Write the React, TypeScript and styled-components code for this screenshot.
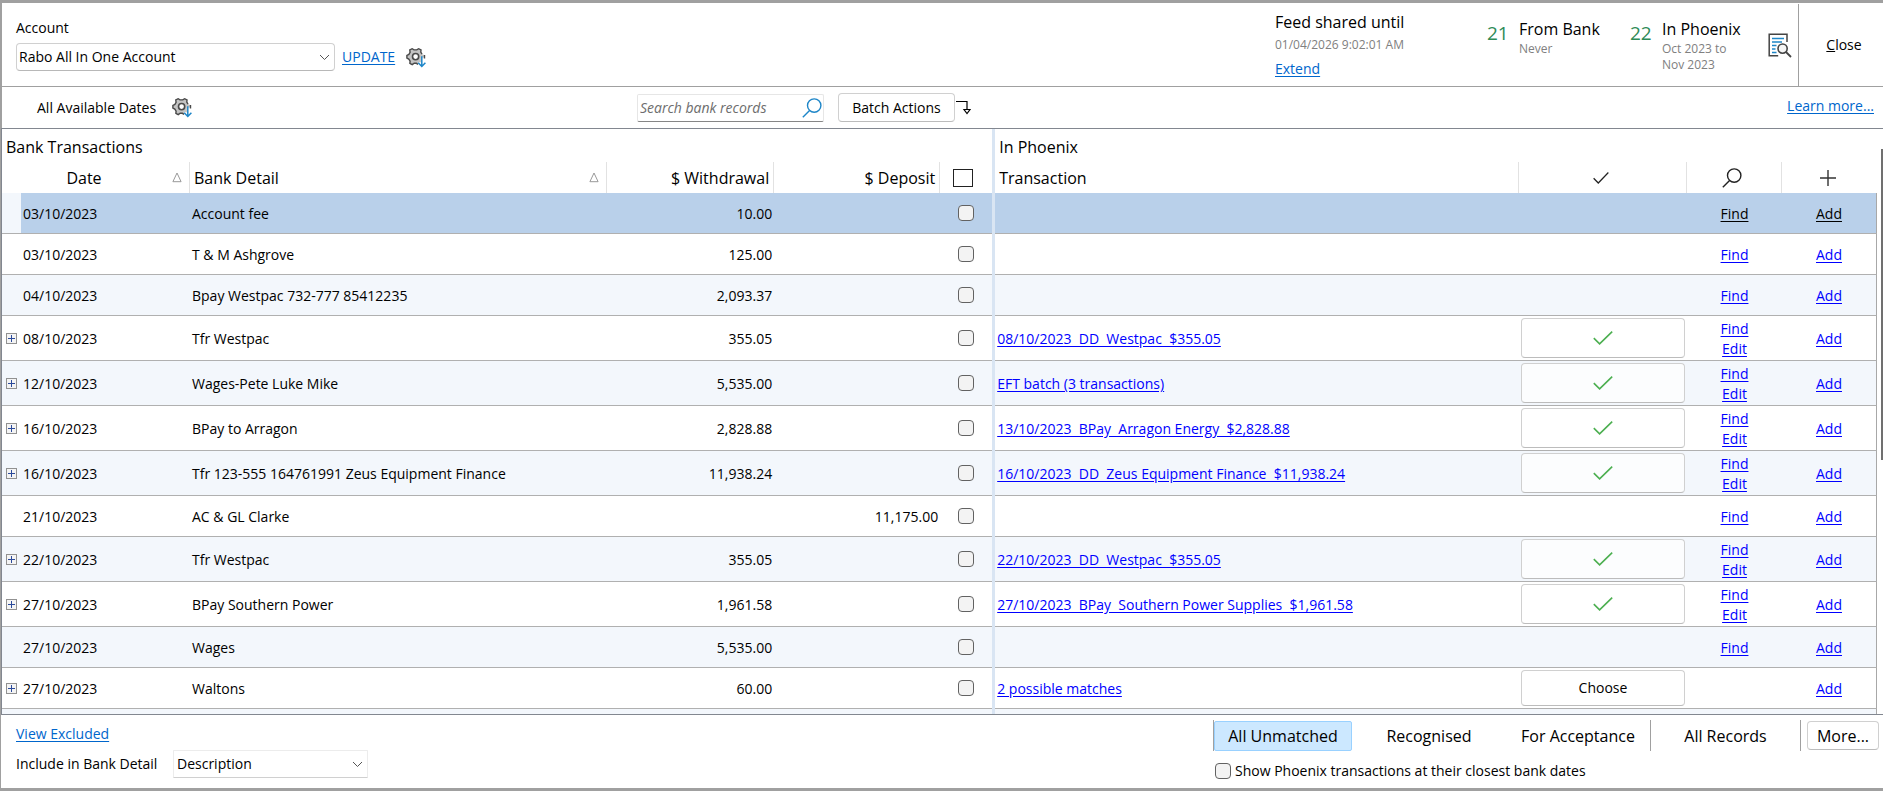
import React from "react";
import styled, { createGlobalStyle, css } from "styled-components";

const GlobalStyle = createGlobalStyle`
  *, *::before, *::after { box-sizing: border-box; }
  body {
    margin: 0;
    background: #fff;
    color: #000;
    font-family: "Segoe UI", "Open Sans", "Noto Sans", sans-serif;
    font-size: 14px;
    line-height: 20px;
  }
  button, input, select { font: inherit; color: inherit; }
`;

const Window = styled.div`
  display: flex;
  flex-direction: column;
  height: 100vh;
  min-height: 480px;
  border: solid #a0a0a0;
  border-width: 3px 0 3px 1px;
`;

const Header = styled.header`
  display: flex;
  justify-content: space-between;
  height: 84px;
  flex: none;
  border-left: 1px solid #a0a0a0;
  border-bottom: 1px solid #a0a0a0;
  white-space: nowrap;
`;

const AccountPanel = styled.div`
  display: flex;
  flex-direction: column;
  gap: 5px;
  padding: 15px 0 0 14px;
`;

const AccountLine = styled.div`
  display: flex;
  align-items: center;
`;

const SelectBox = styled.span<{ $width: number; $plain?: boolean }>`
  display: inline-grid;
  align-items: center;
  width: ${(p) => p.$width}px;
  height: 28px;
  border: 1px solid ${(p) => (p.$plain ? "#ececec" : "#d0d0d0")};
  border-bottom-color: ${(p) => (p.$plain ? "#d0d0d0" : "#b8b8b8")};
  border-radius: ${(p) => (p.$plain ? 1 : 4)}px;

  select {
    grid-area: 1 / 1;
    width: 100%;
    height: 26px;
    padding: 0 28px 0 ${(p) => (p.$plain ? 3 : 2)}px;
    border: 0;
    background: transparent;
    appearance: none;
  }
  svg {
    grid-area: 1 / 1;
    justify-self: end;
    margin-right: 4px;
    pointer-events: none;
  }
`;

const AppLink = styled.a`
  color: #0066cc;
  text-decoration: underline;
  text-underline-offset: 2px;
`;

const UpdateLink = styled(AppLink)`
  margin: 0 11px 0 7px;
`;

const ExtendLink = styled(AppLink)`
  line-height: 26px;
`;

const IconButton = styled.button`
  display: inline-flex;
  padding: 0;
  border: 0;
  background: none;
`;

const StatusPanel = styled.div`
  display: flex;
  flex: none;
`;

const Feed = styled.div`
  display: flex;
  flex-direction: column;
  align-items: flex-start;
  width: 212px;
  padding-top: 7px;
`;

const Heading = styled.span`
  font-size: 16px;
  line-height: 24px;
`;

const Muted = styled.span`
  color: #808080;
  font-size: 12px;
  line-height: 16px;
`;

const FeedDate = styled(Muted)`
  line-height: 22px;
`;

const Stat = styled.div<{ $width: number }>`
  display: flex;
  width: ${(p) => p.$width}px;
  padding-top: 14px;
`;

const StatCount = styled.span`
  width: 32px;
  color: #2e8b57;
  font-size: 19px;
  line-height: 32px;
`;

const StatText = styled.div`
  display: flex;
  flex-direction: column;
`;

const ReportCell = styled.div`
  display: flex;
  align-items: center;
  width: 30px;
  padding-top: 1px;
`;

const CloseButton = styled.button`
  width: 85px;
  margin-top: 1px;
  padding: 0 0 0 6px;
  border: 0;
  border-left: 1px solid #a0a0a0;
  background: none;
`;

const Toolbar = styled.div`
  display: flex;
  align-items: center;
  flex: none;
  height: 41px;
  padding: 0 9px 0 35px;
  border-left: 1px solid #a0a0a0;
  white-space: nowrap;
`;

const DateFilter = styled.div`
  display: flex;
  align-items: center;
  gap: 16px;
  flex: 0 1 600px;
`;

const SearchBox = styled.label`
  display: flex;
  align-items: center;
  width: 187px;
  height: 28px;
  padding: 0 1px 0 2px;
  border: 1px solid #e6e6e6;
  border-bottom-color: #868686;
  border-radius: 2px;

  input {
    flex: 1;
    min-width: 0;
    padding: 0;
    border: 0;
    outline: 0;
    font-style: italic;
    background: none;
  }
  input::placeholder { color: #6d6d6d; opacity: 1; }
`;

const PushButton = styled.button<{ $width?: string; $height: number }>`
  display: inline-flex;
  align-items: center;
  justify-content: center;
  width: ${(p) => p.$width ?? "auto"};
  height: ${(p) => p.$height}px;
  padding: 0;
  border: 1px solid #d0d0d0;
  border-bottom-color: #bcbcbc;
  border-radius: 4px;
  background: rgba(255, 255, 255, 0.7);
`;

const BatchGroup = styled.div`
  display: flex;
  align-items: center;
  gap: 1px;
  margin-left: 14px;
`;

const LearnMore = styled(AppLink)`
  margin: 0 0 4px auto;
`;

const GridArea = styled.main`
  display: flex;
  flex: 1;
  min-height: 0;
  overflow: hidden;
  border: solid #828790;
  border-width: 1px 0 1px 1px;
`;

const TableScroll = styled.div`
  display: flex;
  flex: 1;
  align-items: flex-start;
  min-width: 0;
  overflow: hidden;
`;

const Table = styled.table`
  flex: 1;
  min-width: 0;
  table-layout: fixed;
  border-collapse: separate;
  border-spacing: 0;
  white-space: nowrap;
`;

const Col = styled.col<{ $width?: string }>`
  width: ${(p) => p.$width ?? "auto"};
`;

const TitleCell = styled.th`
  height: 33px;
  padding: 2px 0 0 4px;
  font-size: 16px;
  font-weight: 400;
  text-align: left;
`;

const HeadCell = styled.th<{ $line?: boolean; $align?: string; $indent?: number }>`
  height: 31px;
  padding: 0 4px 0 ${(p) => p.$indent ?? 4}px;
  border-right: ${(p) => (p.$line ? "1px solid #e2e2e2" : "0")};
  font-size: 16px;
  font-weight: 400;
  text-align: ${(p) => p.$align ?? "left"};

  svg { display: block; margin: 0 auto; }
`;

const SortLabel = styled.span<{ $centered?: boolean }>`
  display: flex;
  align-items: center;
  padding-right: 3px;

  span {
    flex: 1;
    padding-right: ${(p) => (p.$centered ? 6 : 0)}px;
    text-align: ${(p) => (p.$centered ? "center" : "left")};
  }
  svg { margin: 0; }
`;

const Divider = styled.td`
  padding: 0;
  background: #d9e5f3;
`;

const Row = styled.tr<{ $shaded: boolean; $selected?: boolean }>`
  background: ${(p) => (p.$selected ? "#b9d0ea" : p.$shaded ? "#f3f7fc" : "#fff")};
  ${(p) =>
    p.$selected &&
    css`
      a { color: #000; }
      td:first-child { background: #f3f7fc; }
    `}
`;

const Cell = styled.td<{ $align?: string; $tall?: boolean }>`
  height: ${(p) => (p.$tall ? 45 : 41)}px;
  padding: 1px 2px 0;
  border-bottom: 1px solid #b0b0b0;
  text-align: ${(p) => p.$align ?? "left"};
  overflow: hidden;

  &:last-child { border-right: 1px solid #a8a8a8; }
  svg { display: block; margin: 0 auto; }
`;

const AmountCell = styled(Cell)`
  text-align: right;
`;

const RowLink = styled.a`
  color: #0000ff;
  text-decoration: underline;
  text-underline-offset: 2px;
  white-space: pre;
`;

const LinkStack = styled.span`
  display: flex;
  flex-direction: column;
  align-items: center;
`;

const Expander = styled.button`
  display: flex;
  align-items: center;
  justify-content: center;
  width: 11px;
  height: 11px;
  margin-left: 2px;
  padding: 0;
  border: 1px solid #919191;
  background: #f4f4f4;
`;

const TickBox = styled.input<{ $header?: boolean }>`
  appearance: none;
  display: block;
  flex: none;
  width: ${(p) => (p.$header ? 20 : 16)}px;
  height: ${(p) => (p.$header ? 18 : 16)}px;
  margin: ${(p) => (p.$header ? "0 0 0 9px" : "0")};
  border: ${(p) => (p.$header ? "1px solid #222" : "1px solid #626262")};
  border-radius: ${(p) => (p.$header ? 0 : 4)}px;
  background: ${(p) => (p.$header ? "#fff" : "#f3f3f3")};
`;

const TickCell = styled(Cell)`
  padding: 0 0 0 18px;
`;

const ButtonCell = styled(Cell)`
  padding: 0 2px;
`;

const Rail = styled.div`
  display: flex;
  justify-content: flex-end;
  flex: none;
  width: 6px;
  padding-top: 20px;
`;

const Thumb = styled.div`
  width: 2px;
  height: 55%;
  background: #707070;
`;

const Footer = styled.footer`
  display: flex;
  justify-content: space-between;
  flex: none;
  height: 73px;
  padding: 5px 4px 0 15px;
  white-space: nowrap;
`;

const FooterLeft = styled.div`
  display: flex;
  flex-direction: column;
  gap: 6px;
  padding-top: 4px;
`;

const FooterField = styled.div`
  display: flex;
  align-items: center;

  label { width: 157px; }
`;

const FooterRight = styled.div`
  display: flex;
  flex-direction: column;
  gap: 10px;
`;

const FilterBar = styled.div`
  display: flex;
  align-items: center;
  height: 31px;
`;

const Rule = styled.span`
  align-self: stretch;
  width: 1px;
  background: #a0a0a0;
`;

const FilterButton = styled.button<{ $width: number; $active?: boolean }>`
  width: ${(p) => p.$width}px;
  height: 30px;
  padding: 0;
  border: 1px solid ${(p) => (p.$active ? "#99d1ff" : "transparent")};
  border-radius: 2px;
  background: ${(p) => (p.$active ? "#cce8ff" : "none")};
  font-size: 16px;
`;

const MoreButton = styled(PushButton)`
  margin-left: 6px;
  font-size: 16px;
`;

const CheckLine = styled.label`
  display: flex;
  align-items: center;
  gap: 4px;
  padding-left: 2px;
`;

const Chevron = () => (
  <svg width="11" height="7" viewBox="0 0 11 7" fill="none" stroke="#555">
    <path d="M1 1l4.5 4.5L10 1" />
  </svg>
);

const GearIcon = () => (
  <svg width="21" height="21" viewBox="0 0 21 21" fill="none">
    <path
      fillRule="evenodd"
      d="M6 1.2l1.8 1.3h3L12.6 1.2l2.6 1.5-.3 2.3 1.4 2.2 2 .9v2.5h-3.4v4.6h-2.8v2.2h-1.6L8.6 16.6 6.2 18.2 3.6 16.8l.2-2.4-1.2-2L.6 11.2V8.2l2-1 1.2-2L3.4 2.8zM9.6 6.6a3.1 3.1 0 100 6.2 3.1 3.1 0 000-6.2z"
      fill="#c4c4c4"
    />
    <path
      d="M12 17.4l-1.6-1.2H8.2l-2 1.4-2.3-1.2.2-2.3-1.3-2-1.9-1.1V8.4l2-1 1.2-2-.3-2.4L6.2 1.7l1.8 1.2h2.8l1.8-1.2L15 3l-.2 2.2 1.2 2M18.5 8v3.4"
      stroke="#4a4a4a"
      strokeWidth="1.4"
    />
    <circle cx="9.6" cy="9.6" r="3.1" stroke="#4a4a4a" strokeWidth="1.6" />
    <path d="M15.8 9.2v10M12.2 15.7l3.6 3.8 3.6-3.8" stroke="#1e86c8" strokeWidth="1.5" />
  </svg>
);

const SearchIcon = ({ size, color }: { size: number; color: string }) => (
  <svg width={size} height={size} viewBox="0 0 20 20" fill="none" stroke={color} strokeWidth="1.4">
    <circle cx="12.2" cy="7.6" r="6.7" />
    <path d="M7.6 12.6L.8 19.3" />
  </svg>
);

const ReportIcon = () => (
  <svg width="24" height="25" viewBox="0 0 24 25" fill="none">
    <path d="M19 9V1.2H1.2v21.6h9" stroke="#444" strokeWidth="1.5" />
    <path d="M4 5.5h12M4 9h10M4 12.5h4.5M4 16h3.5M4 19.5h4.5" stroke="#1e86c8" strokeWidth="1.5" />
    <circle cx="14.6" cy="15.6" r="4.6" fill="#f6f6f6" stroke="#444" strokeWidth="1.6" />
    <path d="M18 19l5 5" stroke="#444" strokeWidth="1.8" />
  </svg>
);

const TurnArrow = () => (
  <svg width="15" height="15" viewBox="0 0 15 15" fill="none" stroke="#000" strokeWidth="1.2">
    <path d="M0 1.5h11v8" />
    <path d="M8 9.5h6l-3 4z" fill="#fff" />
  </svg>
);

const SortIcon = () => (
  <svg width="10" height="11" viewBox="0 0 10 11" fill="none" stroke="#999">
    <path d="M5 1L.9 9.7h8.2z" />
  </svg>
);

const TickIcon = ({ green }: { green?: boolean }) => (
  <svg
    width={green ? 20 : 16}
    height={green ? 14 : 12}
    viewBox="0 0 20 14"
    preserveAspectRatio="none"
    fill="none"
    stroke={green ? "#4caf50" : "#222"}
    strokeWidth="1.6"
  >
    <path d="M.8 7.2L6.6 12.8 19.2.6" />
  </svg>
);

const PlusIcon = () => (
  <svg width="16" height="16" viewBox="0 0 16 16" stroke="#333" strokeWidth="1.4">
    <path d="M0 8h16M8 0v16" />
  </svg>
);

const ExpandMark = () => (
  <svg width="7" height="7" viewBox="0 0 7 7" stroke="#2b4a9b">
    <path d="M0 3.5h7M3.5 0v7" />
  </svg>
);

type BankRecord = {
  date: string;
  detail: string;
  out?: string;
  into?: string;
  match?: string;
  choose?: boolean;
};

const records: BankRecord[] = [
  { date: "03/10/2023", detail: "Account fee", out: "10.00" },
  { date: "03/10/2023", detail: "T & M Ashgrove", out: "125.00" },
  { date: "04/10/2023", detail: "Bpay Westpac 732-777 85412235", out: "2,093.37" },
  { date: "08/10/2023", detail: "Tfr Westpac", out: "355.05", match: "08/10/2023  DD  Westpac  $355.05" },
  { date: "12/10/2023", detail: "Wages-Pete Luke Mike", out: "5,535.00", match: "EFT batch (3 transactions)" },
  { date: "16/10/2023", detail: "BPay to Arragon", out: "2,828.88", match: "13/10/2023  BPay  Arragon Energy  $2,828.88" },
  {
    date: "16/10/2023",
    detail: "Tfr 123-555 164761991 Zeus Equipment Finance",
    out: "11,938.24",
    match: "16/10/2023  DD  Zeus Equipment Finance  $11,938.24",
  },
  { date: "21/10/2023", detail: "AC & GL Clarke", into: "11,175.00" },
  { date: "22/10/2023", detail: "Tfr Westpac", out: "355.05", match: "22/10/2023  DD  Westpac  $355.05" },
  {
    date: "27/10/2023",
    detail: "BPay Southern Power",
    out: "1,961.58",
    match: "27/10/2023  BPay  Southern Power Supplies  $1,961.58",
  },
  { date: "27/10/2023", detail: "Wages", out: "5,535.00" },
  { date: "27/10/2023", detail: "Waltons", out: "60.00", match: "2 possible matches", choose: true },
];

const columns = ["19px", "169px", "22.25%", "167px", "166px", "52px", "3px", undefined, "168px", "95px", "95px"];

function RecordRow({ record, index }: { record: BankRecord; index: number }) {
  const { date, detail, out, into, match, choose } = record;
  const tall = Boolean(match) && !choose;
  return (
    <Row $shaded={index % 2 === 0} $selected={index === 0}>
      <Cell $tall={tall}>
        {match && (
          <Expander aria-label="Expand">
            <ExpandMark />
          </Expander>
        )}
      </Cell>
      <Cell>{date}</Cell>
      <Cell>{detail}</Cell>
      <AmountCell>{out}</AmountCell>
      <AmountCell>{into}</AmountCell>
      <TickCell>
        <TickBox type="checkbox" aria-label={`Select ${detail}`} />
      </TickCell>
      <Divider />
      <Cell>{match && <RowLink href="#">{match}</RowLink>}</Cell>
      <ButtonCell>
        {match && (
          <PushButton $width="100%" $height={choose ? 36 : 40} aria-label={choose ? undefined : "Accept"}>
            {choose ? "Choose" : <TickIcon green />}
          </PushButton>
        )}
      </ButtonCell>
      <Cell>
        <LinkStack>
          {!choose && <RowLink href="#">Find</RowLink>}
          {tall && <RowLink href="#">Edit</RowLink>}
        </LinkStack>
      </Cell>
      <Cell $align="center">
        <RowLink href="#">Add</RowLink>
      </Cell>
    </Row>
  );
}

export default function App() {
  return (
    <>
      <GlobalStyle />
      <Window>
        <Header>
          <AccountPanel>
            <label htmlFor="account">Account</label>
            <AccountLine>
              <SelectBox $width={319}>
                <select id="account">
                  <option>Rabo All In One Account</option>
                </select>
                <Chevron />
              </SelectBox>
              <UpdateLink href="#">UPDATE</UpdateLink>
              <IconButton aria-label="Update settings">
                <GearIcon />
              </IconButton>
            </AccountLine>
          </AccountPanel>
          <StatusPanel>
            <Feed>
              <Heading>Feed shared until</Heading>
              <FeedDate>01/04/2026 9:02:01 AM</FeedDate>
              <ExtendLink href="#">Extend</ExtendLink>
            </Feed>
            <Stat $width={143}>
              <StatCount>21</StatCount>
              <StatText>
                <Heading>From Bank</Heading>
                <Muted>Never</Muted>
              </StatText>
            </Stat>
            <Stat $width={138}>
              <StatCount>22</StatCount>
              <StatText>
                <Heading>In Phoenix</Heading>
                <Muted>Oct 2023 to</Muted>
                <Muted>Nov 2023</Muted>
              </StatText>
            </Stat>
            <ReportCell>
              <IconButton aria-label="View report">
                <ReportIcon />
              </IconButton>
            </ReportCell>
            <CloseButton>
              <u>C</u>lose
            </CloseButton>
          </StatusPanel>
        </Header>

        <Toolbar>
          <DateFilter>
            All Available Dates
            <IconButton aria-label="Date settings">
              <GearIcon />
            </IconButton>
          </DateFilter>
          <SearchBox>
            <input type="text" aria-label="Search bank records" placeholder="Search bank records" />
            <SearchIcon size={20} color="#1e86c8" />
          </SearchBox>
          <BatchGroup>
            <PushButton $width="117px" $height={29}>
              Batch Actions
            </PushButton>
            <TurnArrow />
          </BatchGroup>
          <LearnMore href="#">Learn more...</LearnMore>
        </Toolbar>

        <GridArea>
          <TableScroll>
            <Table>
              <colgroup>
                {columns.map((width, i) => (
                  <Col key={i} $width={width} />
                ))}
              </colgroup>
              <thead>
                <tr>
                  <TitleCell colSpan={6}>Bank Transactions</TitleCell>
                  <Divider />
                  <TitleCell colSpan={4}>In Phoenix</TitleCell>
                </tr>
                <tr>
                  <HeadCell colSpan={2} $line $indent={0}>
                    <SortLabel $centered>
                      <span>Date</span>
                      <SortIcon />
                    </SortLabel>
                  </HeadCell>
                  <HeadCell $line>
                    <SortLabel>
                      <span>Bank Detail</span>
                      <SortIcon />
                    </SortLabel>
                  </HeadCell>
                  <HeadCell $line $align="right">
                    $ Withdrawal
                  </HeadCell>
                  <HeadCell $line $align="right">
                    $ Deposit
                  </HeadCell>
                  <HeadCell>
                    <TickBox type="checkbox" $header aria-label="Select all" />
                  </HeadCell>
                  <Divider />
                  <HeadCell $line>Transaction</HeadCell>
                  <HeadCell $line $indent={0} aria-label="Accept">
                    <TickIcon />
                  </HeadCell>
                  <HeadCell $line $indent={0} aria-label="Find">
                    <SearchIcon size={20} color="#222" />
                  </HeadCell>
                  <HeadCell $indent={0} aria-label="Add">
                    <PlusIcon />
                  </HeadCell>
                </tr>
              </thead>
              <tbody>
                {records.map((record, i) => (
                  <RecordRow key={i} record={record} index={i} />
                ))}
                <Row $shaded>
                  <Cell colSpan={6} />
                  <Divider />
                  <Cell colSpan={4} />
                </Row>
              </tbody>
            </Table>
          </TableScroll>
          <Rail>
            <Thumb />
          </Rail>
        </GridArea>

        <Footer>
          <FooterLeft>
            <AppLink href="#">View Excluded</AppLink>
            <FooterField>
              <label htmlFor="include">Include in Bank Detail</label>
              <SelectBox $width={195} $plain>
                <select id="include">
                  <option>Description</option>
                </select>
                <Chevron />
              </SelectBox>
            </FooterField>
          </FooterLeft>
          <FooterRight>
            <FilterBar>
              <Rule />
              <FilterButton $width={138} $active>
                All Unmatched
              </FilterButton>
              <FilterButton $width={154}>Recognised</FilterButton>
              <FilterButton $width={144}>For Acceptance</FilterButton>
              <Rule />
              <FilterButton $width={149}>All Records</FilterButton>
              <Rule />
              <MoreButton $width="72px" $height={29}>
                More...
              </MoreButton>
            </FilterBar>
            <CheckLine>
              <TickBox type="checkbox" />
              Show Phoenix transactions at their closest bank dates
            </CheckLine>
          </FooterRight>
        </Footer>
      </Window>
    </>
  );
}
